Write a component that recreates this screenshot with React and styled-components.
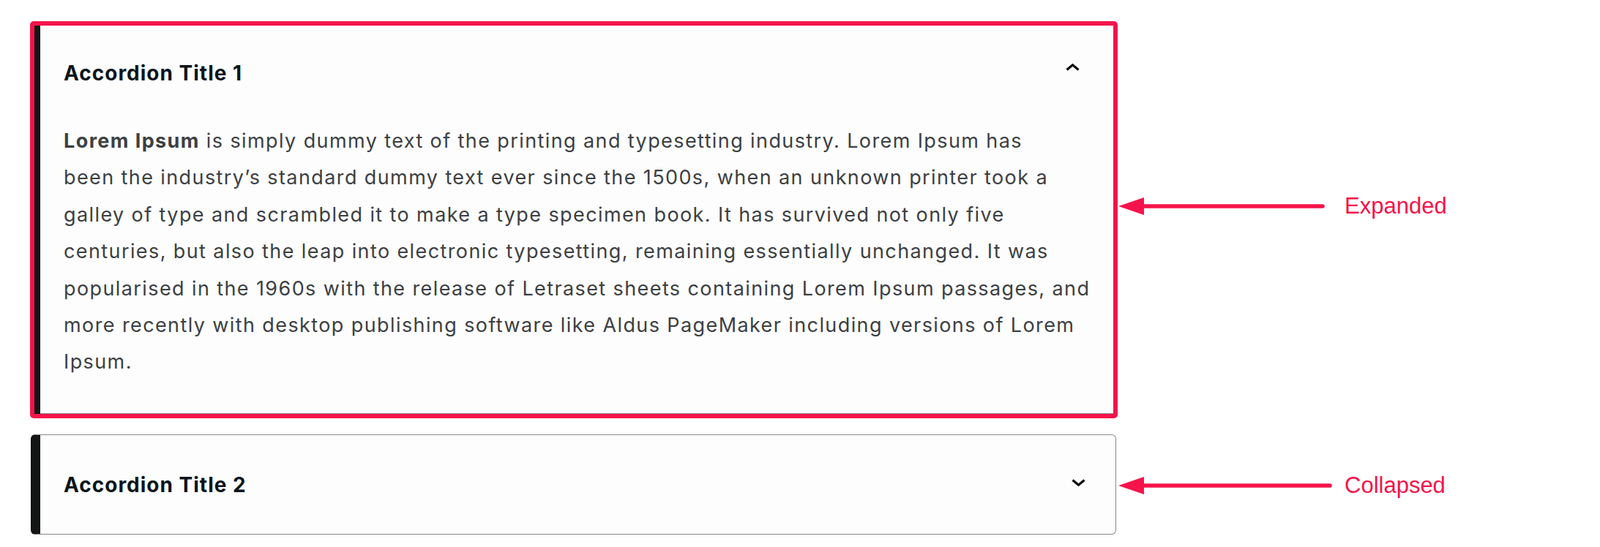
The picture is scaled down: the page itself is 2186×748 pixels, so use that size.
import React from 'react';
import styled, { createGlobalStyle, css } from 'styled-components';

const RED = '#f5134b';

const GlobalStyle = createGlobalStyle`
  body {
    margin: 0;
    background: #ffffff;
    font-family: Inter, "Open Sans", sans-serif;
  }
`;

const Page = styled.div`
  display: grid;
  grid-template-columns: 1486px 1fr;
  row-gap: 22px;
  padding: 29px 0 0 41px;
`;

const Item = styled.section`
  box-sizing: border-box;
  width: 1483px;
  margin-left: 1px;
  background: #fdfdfd;
  border: 1px solid #8a8a8a;
  border-left: 13px solid #141515;
  border-radius: 6px;
  ${p => p.$highlight && css`
    width: 1486px;
    margin-left: 0;
    border: 6px solid ${RED};
    border-radius: 5px;
    box-shadow: inset 8px 0 0 #141515, inset 0 -1px 0 #8a8a8a;
  `}
`;

const Header = styled.div`
  display: flex;
  align-items: center;
  justify-content: space-between;
  padding: ${p => (p.$highlight ? '45px 46px 48px 40px' : '48px 41px 47px 32px')};
  cursor: pointer;
`;

const Title = styled.h3`
  margin: 0;
  font-size: 28px;
  line-height: 40px;
  font-weight: 700;
  letter-spacing: 1px;
  color: #0c151b;
`;

const Chevron = styled.svg`
  display: block;
  width: 19px;
  height: 10px;
  margin-bottom: ${p => (p.$up ? '16px' : '6px')};
`;

const Body = styled.div`
  padding: 0 24px 45px 40px;
  font-size: 27px;
  line-height: 50.4px;
  letter-spacing: 1.4px;
  color: #3c4043;

  p {
    margin: 0;
  }
  strong {
    font-weight: 700;
  }
`;

const Callout = styled.div`
  display: flex;
  align-items: center;
  gap: ${p => p.$gap}px;
  align-self: center;
  padding-left: 1px;
  margin: ${p => p.$shift};
`;

const Label = styled.span`
  font-family: "Liberation Sans", Arial, sans-serif;
  font-size: 31px;
  color: ${RED};
`;

const Arrow = ({ length }) => (
  <svg width={length} height="26" viewBox={`0 0 ${length} 26`}>
    <polygon points="0,13 35,1 35,25" fill={RED} />
    <line x1="33" y1="13" x2={length - 3} y2="13" stroke={RED} strokeWidth="5.5" strokeLinecap="round" />
  </svg>
);

const ChevronIcon = ({ up }) => (
  <Chevron $up={up} viewBox="0 0 19 10">
    <polyline
      points={up ? '1.5,8.5 9.5,1.8 17.5,8.5' : '1.5,1.5 9.5,8.2 17.5,1.5'}
      fill="none"
      stroke="#0c0c0c"
      strokeWidth="3.2"
    />
  </Chevron>
);

const AccordionItem = ({ title, open, highlight, children }) => (
  <Item $highlight={highlight}>
    <Header $highlight={highlight}>
      <Title>{title}</Title>
      <ChevronIcon up={open} />
    </Header>
    {open && <Body>{children}</Body>}
  </Item>
);

export default function App() {
  return (
    <>
      <GlobalStyle />
      <Page>
        <AccordionItem title="Accordion Title 1" open highlight>
          <p>
            <strong>Lorem Ipsum</strong> is simply dummy text of the printing and typesetting industry. Lorem Ipsum has<br />
            been the industry’s standard dummy text ever since the 1500s, when an unknown printer took a<br />
            galley of type and scrambled it to make a type specimen book. It has survived not only five<br />
            centuries, but also the leap into electronic typesetting, remaining essentially unchanged. It was<br />
            popularised in the 1960s with the release of Letraset sheets containing Lorem Ipsum passages, and<br />
            more recently with desktop publishing software like Aldus PageMaker including versions of Lorem<br />
            Ipsum.
          </p>
        </AccordionItem>
        <Callout $gap={27} $shift="0 0 36px 0">
          <Arrow length={282} />
          <Label>Expanded</Label>
        </Callout>

        <AccordionItem title="Accordion Title 2" />
        <Callout $gap={17} $shift="4px 0 0 0">
          <Arrow length={292} />
          <Label>Collapsed</Label>
        </Callout>
      </Page>
    </>
  );
}
